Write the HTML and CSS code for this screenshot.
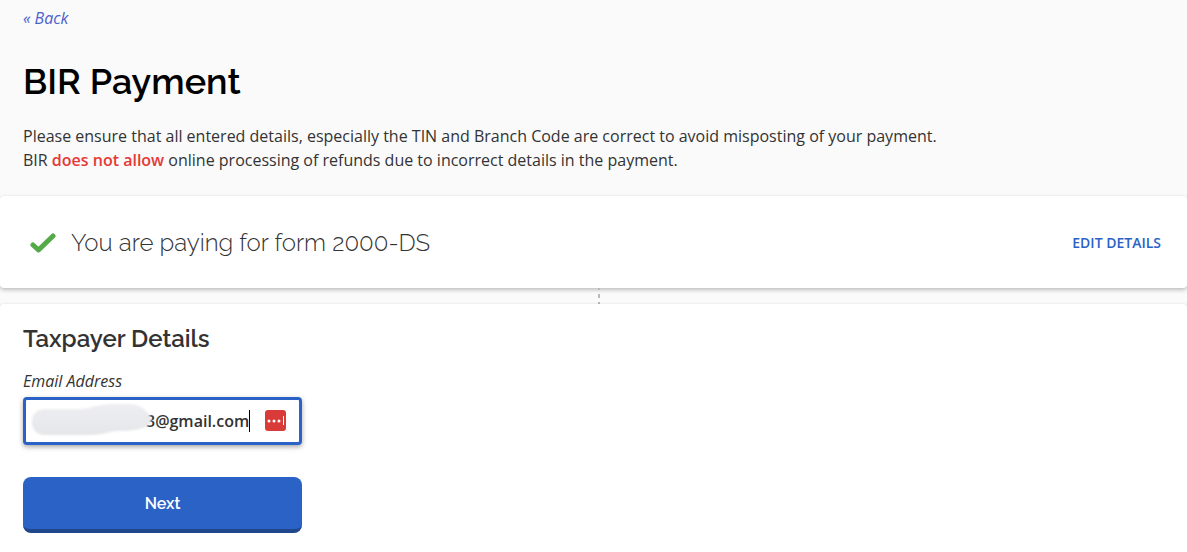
FILE: index.html
```html
<!DOCTYPE html>
<html lang="en">
<head>
<meta charset="UTF-8">
<meta name="viewport" content="width=device-width, initial-scale=1.0">
<title>BIR Payment</title>
<link rel="stylesheet" href="styles.css">
</head>
<body>
<header class="page-header">
  <a href="#" class="back-link">« Back</a>
  <h1 class="page-title">BIR Payment</h1>
  <p class="notice">
    Please ensure that all entered details, especially the TIN and Branch Code are correct to avoid misposting of your payment.<br>
    BIR <strong class="warning">does not allow</strong> online processing of refunds due to incorrect details in the payment.
  </p>
</header>
<main>
  <section class="card summary">
    <svg class="check" viewBox="0 0 26 20" aria-hidden="true">
      <path d="M3 12L8.5 17L23 3" fill="none" stroke="#54aa49" stroke-width="5" stroke-linecap="round" stroke-linejoin="round"/>
    </svg>
    <h2 class="summary-title">You are paying for form 2000-DS</h2>
    <a href="#" class="edit-link">EDIT DETAILS</a>
  </section>
  <div class="connector"></div>
  <section class="card details">
    <h2 class="details-title">Taxpayer Details</h2>
    <form class="details-form">
      <label class="label" for="email">Email Address</label>
      <div class="field">
        <input type="text" class="form-input" id="email" value="3@gmail.com">
        <svg class="redaction" viewBox="0 0 124 38" aria-hidden="true">
          <defs>
            <linearGradient id="smudge" x1="0" y1="0" x2="0" y2="1">
              <stop offset="0" stop-color="#eeeef3"/>
              <stop offset="1" stop-color="#e5e6e8"/>
            </linearGradient>
            <filter id="soften"><feGaussianBlur stdDeviation="1"/></filter>
          </defs>
          <path filter="url(#soften)" fill="url(#smudge)" d="M16 8H54C66 6 72 3 86 3H103C112 4 116 9 121 14C124 20 121 24 116 26C108 30 94 30 87 30C78 31 72 34 62 34H16C7 34 3 28 3 21C3 13 8 8 16 8Z"/>
        </svg>
        <span class="caret"></span>
        <button type="button" class="password-icon" aria-label="Fill with password manager">
          <svg viewBox="0 0 21 21" aria-hidden="true">
            <rect width="21" height="21" rx="3" fill="#d93c38"/>
            <g fill="#fff">
              <circle cx="4" cy="11" r="1.5"/>
              <circle cx="9" cy="11" r="1.5"/>
              <circle cx="14" cy="11" r="1.5"/>
              <rect x="18" y="6" width="1" height="9"/>
            </g>
          </svg>
        </button>
      </div>
      <button type="submit" class="btn">Next</button>
    </form>
  </section>
</main>
</body>
</html>
```
FILE: styles.css
```css
* {
  box-sizing: border-box;
}
body {
  margin: 0;
  background-color: #fafafa;
  color: #333;
  font-family: "Open Sans", sans-serif;
  font-size: 16px;
  line-height: 24px;
}
h1, h2, p {
  margin: 0;
}
a {
  text-decoration: none;
}
.page-header {
  padding: 6px 23px 24px;
}
.back-link {
  color: #4a62cc;
  font-style: italic;
}
.page-title {
  margin: 27px 0 19px;
  color: #000;
  font-family: Raleway, Lato, sans-serif;
  font-size: 36px;
  font-weight: 600;
  line-height: 48px;
}
.warning {
  color: #e53935;
  font-weight: 600;
}
.card {
  background-color: #fff;
  border-radius: 4px;
  box-shadow: 0 2px 4px rgba(0, 0, 0, 0.24), 0 0 2px rgba(0, 0, 0, 0.06);
}
.summary {
  display: flex;
  align-items: center;
  min-height: 92px;
  padding: 2px 26px 0 30px;
}
.check {
  width: 26px;
  height: 20px;
  margin-right: 15px;
}
.summary-title {
  flex: 1;
  font-family: Raleway, Lato, sans-serif;
  font-size: 24px;
  font-weight: 300;
  font-variant-numeric: oldstyle-nums;
  line-height: 32px;
}
.edit-link {
  color: #2b62c6;
  font-size: 14px;
  font-weight: 600;
}
.connector {
  width: 2px;
  height: 16px;
  margin-left: 50.4%;
  background: repeating-linear-gradient(#bbb 0 2px, transparent 2px 6px, #bbb 6px 8px);
}
.details {
  min-height: 248px;
  padding: 19px 23px;
  border-radius: 4px 4px 0 0;
}
.details-title {
  font-family: Raleway, Lato, sans-serif;
  font-size: 24px;
  font-weight: 600;
  line-height: 32px;
}
.details-form {
  max-width: 279px;
}
.label {
  display: block;
  margin: 14px 0 4px;
  font-style: italic;
}
.field {
  position: relative;
}
.form-input {
  display: block;
  width: 100%;
  height: 48px;
  padding: 0 40px 0 120px;
  border: 3px solid #2b62c6;
  border-radius: 4px;
  outline: none;
  box-shadow: 0 2px 5px rgba(0, 0, 0, 0.35);
  color: #333;
  font: 600 16px "Open Sans", sans-serif;
}
.redaction {
  position: absolute;
  top: 4px;
  left: 6px;
  width: 124px;
  height: 38px;
}
.caret {
  position: absolute;
  top: 13px;
  left: 226px;
  width: 1px;
  height: 22px;
  background-color: #000;
}
.password-icon {
  position: absolute;
  top: 13px;
  right: 16px;
  width: 21px;
  height: 21px;
  padding: 0;
  border: none;
  background: none;
  cursor: pointer;
}
.password-icon svg {
  display: block;
}
.btn {
  width: 100%;
  height: 56px;
  margin-top: 32px;
  padding: 0;
  border: none;
  border-bottom: 4px solid #20478c;
  border-radius: 8px;
  background-color: #2b62c6;
  color: #fff;
  font: 600 16px Raleway, Lato, sans-serif;
  cursor: pointer;
}
```
